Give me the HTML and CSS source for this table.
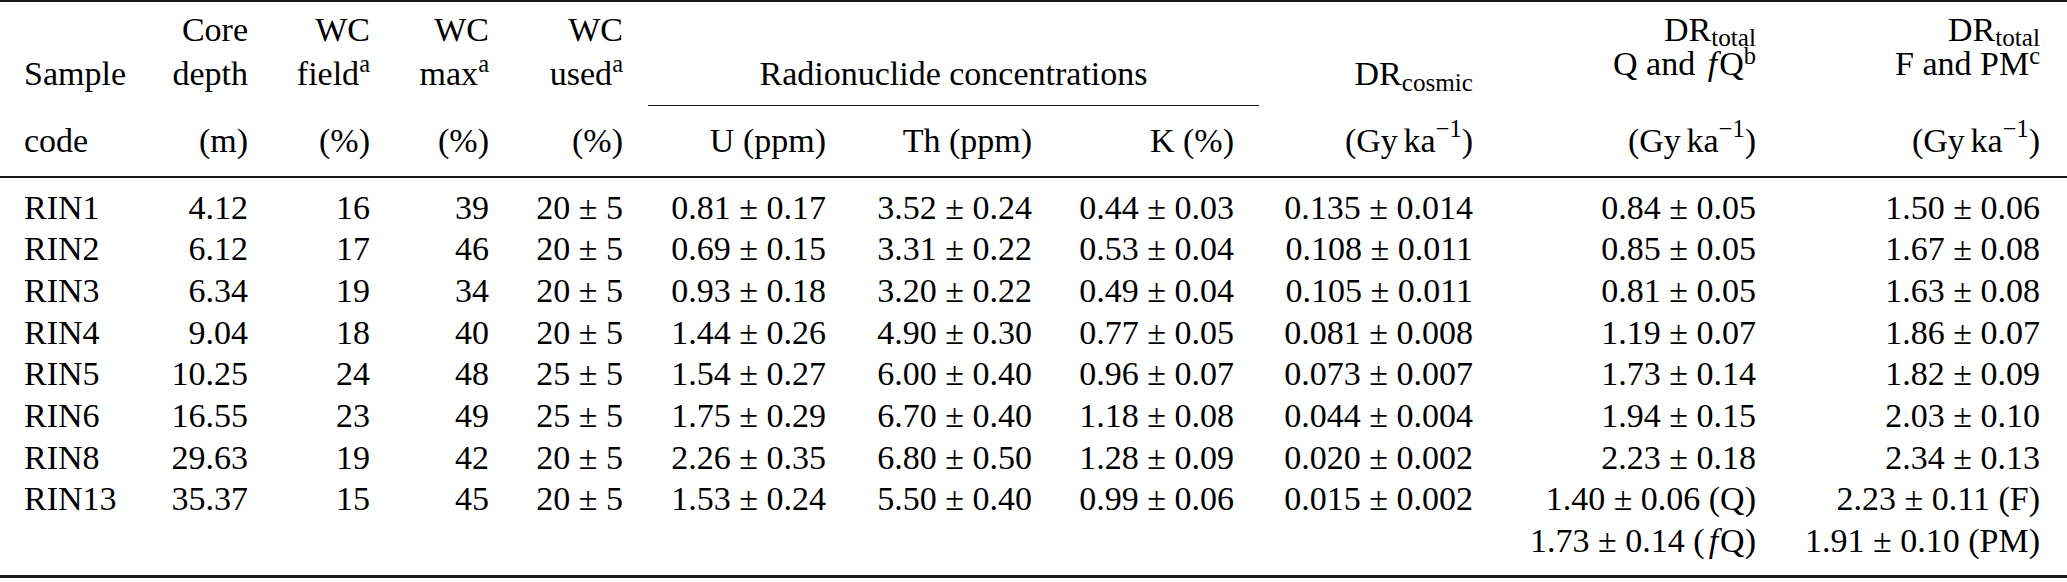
FILE: index.html
```html
<!DOCTYPE html>
<html>
<head>
<meta charset="utf-8">
<link rel="stylesheet" href="styles.css">
</head>
<body>
<div class="frame">
<table class="tbl">
  <colgroup>
    <col class="w1"><col class="w2"><col class="w3"><col class="w4"><col class="w5"><col class="w6">
    <col class="w7"><col class="w8"><col class="w9"><col class="w10"><col class="w11">
  </colgroup>
  <thead>
    <tr class="h1">
      <th class="first"></th>
      <th>Core</th>
      <th>WC</th>
      <th>WC</th>
      <th>WC</th>
      <th></th><th></th><th></th><th></th>
      <th rowspan="2" class="stack"><div class="stk">DR<sub>total</sub><br>Q and <i class="mf">f</i>Q<sup>b</sup></div></th>
      <th rowspan="2" class="stack last"><div class="stk">DR<sub>total</sub><br>F and PM<sup>c</sup></div></th>
    </tr>
    <tr class="h2">
      <th class="first">Sample</th>
      <th>depth</th>
      <th>field<sup>a</sup></th>
      <th>max<sup>a</sup></th>
      <th>used<sup>a</sup></th>
      <th colspan="3" class="span"><div class="cmid">Radionuclide concentrations</div></th>
      <th>DR<sub>cosmic</sub></th>
    </tr>
    <tr class="h3">
      <th class="first">code</th>
      <th>(m)</th>
      <th>(%)</th>
      <th>(%)</th>
      <th>(%)</th>
      <th>U (ppm)</th>
      <th>Th (ppm)</th>
      <th>K (%)</th>
      <th>(Gy<span class="thin"></span>ka<sup class="neg">−1</sup>)</th>
      <th>(Gy<span class="thin"></span>ka<sup class="neg">−1</sup>)</th>
      <th class="last">(Gy<span class="thin"></span>ka<sup class="neg">−1</sup>)</th>
    </tr>
  </thead>
  <tbody>
    <tr class="r top">
      <td class="first">RIN1</td><td>4.12</td><td>16</td><td>39</td><td>20 ± 5</td>
      <td>0.81 ± 0.17</td><td>3.52 ± 0.24</td><td>0.44 ± 0.03</td><td>0.135 ± 0.014</td>
      <td>0.84 ± 0.05</td><td class="last">1.50 ± 0.06</td>
    </tr>
    <tr class="r">
      <td class="first">RIN2</td><td>6.12</td><td>17</td><td>46</td><td>20 ± 5</td>
      <td>0.69 ± 0.15</td><td>3.31 ± 0.22</td><td>0.53 ± 0.04</td><td>0.108 ± 0.011</td>
      <td>0.85 ± 0.05</td><td class="last">1.67 ± 0.08</td>
    </tr>
    <tr class="r">
      <td class="first">RIN3</td><td>6.34</td><td>19</td><td>34</td><td>20 ± 5</td>
      <td>0.93 ± 0.18</td><td>3.20 ± 0.22</td><td>0.49 ± 0.04</td><td>0.105 ± 0.011</td>
      <td>0.81 ± 0.05</td><td class="last">1.63 ± 0.08</td>
    </tr>
    <tr class="r">
      <td class="first">RIN4</td><td>9.04</td><td>18</td><td>40</td><td>20 ± 5</td>
      <td>1.44 ± 0.26</td><td>4.90 ± 0.30</td><td>0.77 ± 0.05</td><td>0.081 ± 0.008</td>
      <td>1.19 ± 0.07</td><td class="last">1.86 ± 0.07</td>
    </tr>
    <tr class="r">
      <td class="first">RIN5</td><td>10.25</td><td>24</td><td>48</td><td>25 ± 5</td>
      <td>1.54 ± 0.27</td><td>6.00 ± 0.40</td><td>0.96 ± 0.07</td><td>0.073 ± 0.007</td>
      <td>1.73 ± 0.14</td><td class="last">1.82 ± 0.09</td>
    </tr>
    <tr class="r">
      <td class="first">RIN6</td><td>16.55</td><td>23</td><td>49</td><td>25 ± 5</td>
      <td>1.75 ± 0.29</td><td>6.70 ± 0.40</td><td>1.18 ± 0.08</td><td>0.044 ± 0.004</td>
      <td>1.94 ± 0.15</td><td class="last">2.03 ± 0.10</td>
    </tr>
    <tr class="r">
      <td class="first">RIN8</td><td>29.63</td><td>19</td><td>42</td><td>20 ± 5</td>
      <td>2.26 ± 0.35</td><td>6.80 ± 0.50</td><td>1.28 ± 0.09</td><td>0.020 ± 0.002</td>
      <td>2.23 ± 0.18</td><td class="last">2.34 ± 0.13</td>
    </tr>
    <tr class="r">
      <td class="first">RIN13</td><td>35.37</td><td>15</td><td>45</td><td>20 ± 5</td>
      <td>1.53 ± 0.24</td><td>5.50 ± 0.40</td><td>0.99 ± 0.06</td><td>0.015 ± 0.002</td>
      <td>1.40 ± 0.06 (Q)</td><td class="last">2.23 ± 0.11 (F)</td>
    </tr>
    <tr class="r bottom">
      <td class="first"></td><td></td><td></td><td></td><td></td>
      <td></td><td></td><td></td><td></td>
      <td>1.73 ± 0.14 (<i class="mf">f</i>Q)</td><td class="last">1.91 ± 0.10 (PM)</td>
    </tr>
  </tbody>
</table>
</div>
</body>
</html>
```

FILE: styles.css
```css
html, body {
  margin: 0;
  padding: 0;
  background: #ffffff;
}

body {
  font-family: "Liberation Serif", "Times New Roman", serif;
  font-size: 34px;
  color: #000000;
}

.frame {
  width: 2067px;
  border-top: 2px solid #1a1a1a;
  border-bottom: 3px solid #1a1a1a;
}

.tbl {
  width: 2067px;
  table-layout: fixed;
  border-collapse: separate;
  border-spacing: 0;
}

.w1 { width: 140px; }
.w2 { width: 133px; }
.w3 { width: 122px; }
.w4 { width: 119px; }
.w5 { width: 134px; }
.w6 { width: 203px; }
.w7 { width: 206px; }
.w8 { width: 202px; }
.w9 { width: 239px; }
.w10 { width: 283px; }
.w11 { width: 286px; }

th, td {
  padding: 0 25px 0 0;
  text-align: right;
  font-weight: normal;
  vertical-align: top;
  white-space: nowrap;
  line-height: 40px;
}

th.first, td.first {
  text-align: left;
  padding-left: 24px;
  padding-right: 0;
}

th.last, td.last {
  padding-right: 27px;
}

/* header row 1 */
.h1 th {
  padding-top: 7.5px;
  padding-bottom: 4px;
}

.h1 th.stack {
  padding-top: 10.5px;
  padding-bottom: 0;
}

.stk {
  line-height: 34px;
}

.stk sub {
  vertical-align: -0.18em;
}

.stk sup {
  vertical-align: 0.45em;
}

/* header row 2 */
.h2 th {
  padding-bottom: 27px;
}

.h2 th.span {
  padding: 0;
  text-align: center;
}

.cmid {
  padding-bottom: 11px;
  border-bottom: 1.5px solid #1a1a1a;
}

/* header row 3 */
.h3 th {
  padding-bottom: 15.5px;
  border-bottom: 2px solid #1a1a1a;
}

/* body rows */
.r td {
  line-height: 41.7px;
}

.r.top td {
  padding-top: 8.5px;
}

.r.bottom td {
  padding-bottom: 13.5px;
}

sup {
  font-size: 0.72em;
  line-height: 0;
  vertical-align: 0.55em;
}

sup.neg {
  vertical-align: 0.6em;
}

sub {
  font-size: 0.74em;
  line-height: 0;
  vertical-align: -0.22em;
}

.thin {
  display: inline-block;
  width: 0.17em;
}

.mf {
  font-style: italic;
  margin-left: 0.12em;
  margin-right: 0.06em;
}
```
